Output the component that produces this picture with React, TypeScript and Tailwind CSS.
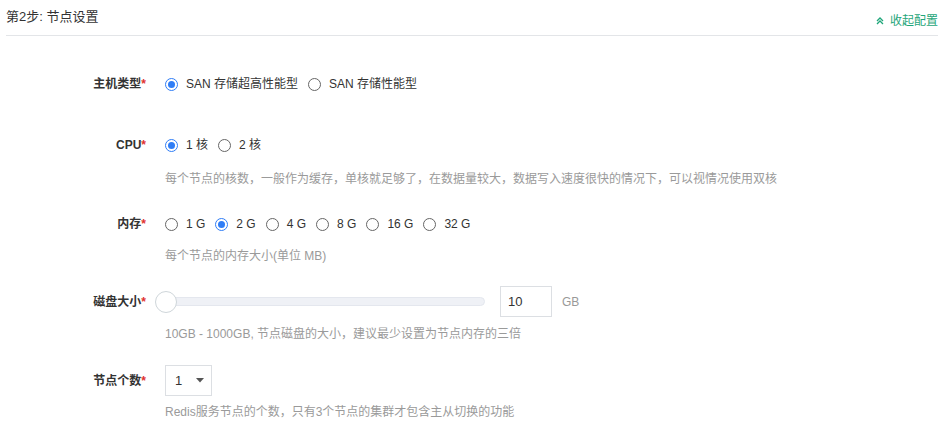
// Step 2 node settings form

const FONT = { fontFamily: '"Liberation Sans", "Noto Sans CJK SC", sans-serif' };

function Radio({ checked, label, gap = "mr-[10px]" }: { checked?: boolean; label: string; gap?: string }) {
  return (
    <label className={`flex items-center ${gap}`}>
      <span
        className={`flex h-[13px] w-[13px] items-center justify-center rounded-full border ${
          checked ? "border-[#2f7df6]" : "border-[#666]"
        }`}
      >
        {checked && <span className="h-[7px] w-[7px] rounded-full bg-[#2f7df6]" />}
      </span>
      <span className="ml-[8px] text-[12px] text-[#333]">{label}</span>
    </label>
  );
}

function Label({ text }: { text: string }) {
  return (
    <div className="w-[146px] shrink-0 text-right text-[12px] font-bold text-[#333]">
      {text}
      <span className="text-[#e0312e]">*</span>
    </div>
  );
}

function Help({ children, mt }: { children: React.ReactNode; mt: string }) {
  return (
    <div className={`${mt} pl-[165px] text-[12px] leading-[18px] text-[#9a9a9a]`}>{children}</div>
  );
}

export default function App() {
  return (
    <div className="h-[428px] w-[944px] bg-white" style={FONT}>
      {/* ── Header ─────────────────────────────────────────────── */}
      <div className="mx-[6px] flex h-[36px] items-start justify-between border-b border-[#e3e5e8]">
        <div className="pt-[7px] text-[13px] text-[#333]">第2步: 节点设置</div>
        <div className="flex items-center pt-[12px] text-[12px] text-[#1fa67a]">
          <svg width="10" height="10" viewBox="0 0 10 10" className="mr-[5px]">
            <path d="M2 5 L5 2 L8 5 M2 8 L5 5 L8 8" fill="none" stroke="#1fa67a" strokeWidth="1.3" />
          </svg>
          收起配置
        </div>
      </div>

      {/* ── 主机类型 ──────────────────────────────────────────── */}
      <div className="mt-[38px] flex h-[20px] items-center">
        <Label text="主机类型" />
        <div className="ml-[19px] flex items-center">
          <Radio checked label="SAN 存储超高性能型" />
          <Radio label="SAN 存储性能型" />
        </div>
      </div>

      {/* ── CPU ───────────────────────────────────────────────── */}
      <div className="mt-[41px] flex h-[20px] items-center">
        <Label text="CPU" />
        <div className="ml-[19px] flex items-center">
          <Radio checked label="1 核" />
          <Radio label="2 核" />
        </div>
      </div>
      <Help mt="mt-[15px]">
        每个节点的核数，一般作为缓存，单核就足够了，在数据量较大，数据写入速度很快的情况下，可以视情况使用双核
      </Help>

      {/* ── 内存 ──────────────────────────────────────────────── */}
      <div className="mt-[26px] flex h-[20px] items-center">
        <Label text="内存" />
        <div className="ml-[19px] flex items-center">
          {["1 G", "2 G", "4 G", "8 G", "16 G", "32 G"].map((g) => (
            <Radio key={g} checked={g === "2 G"} label={g} />
          ))}
        </div>
      </div>
      <Help mt="mt-[13px]">每个节点的内存大小(单位 MB)</Help>

      {/* ── 磁盘大小 ──────────────────────────────────────────── */}
      <div className="mt-[21px] flex h-[31px] items-center">
        <Label text="磁盘大小" />
        <div className="ml-[12px] flex items-center">
          <div className="relative h-[9px] w-[327px] rounded-full border border-[#e4e7ee] bg-[#eff1f6]">
            <span className="absolute left-[-4px] top-[-7px] h-[22px] w-[22px] rounded-full border border-[#cfd6da] bg-white" />
          </div>
          <div className="ml-[15px] flex h-[31px] w-[52px] items-center border border-[#dcdfe3] pl-[7px] text-[13px] text-[#333]">
            10
          </div>
          <span className="ml-[10px] text-[12px] text-[#999]">GB</span>
        </div>
      </div>
      <Help mt="mt-[8px]">10GB - 1000GB, 节点磁盘的大小，建议最少设置为节点内存的三倍</Help>

      {/* ── 节点个数 ──────────────────────────────────────────── */}
      <div className="mt-[22px] flex h-[31px] items-center">
        <Label text="节点个数" />
        <div className="ml-[19px] flex h-[31px] w-[47px] items-center border border-[#dcdfe3] pl-[9px] text-[13px] text-[#333]">
          1
          <svg width="8" height="5" viewBox="0 0 8 5" className="ml-[14px]">
            <path d="M0 0 L8 0 L4 4.5 Z" fill="#555" />
          </svg>
        </div>
      </div>
      <Help mt="mt-[7px]">Redis服务节点的个数，只有3个节点的集群才包含主从切换的功能</Help>
    </div>
  );
}
